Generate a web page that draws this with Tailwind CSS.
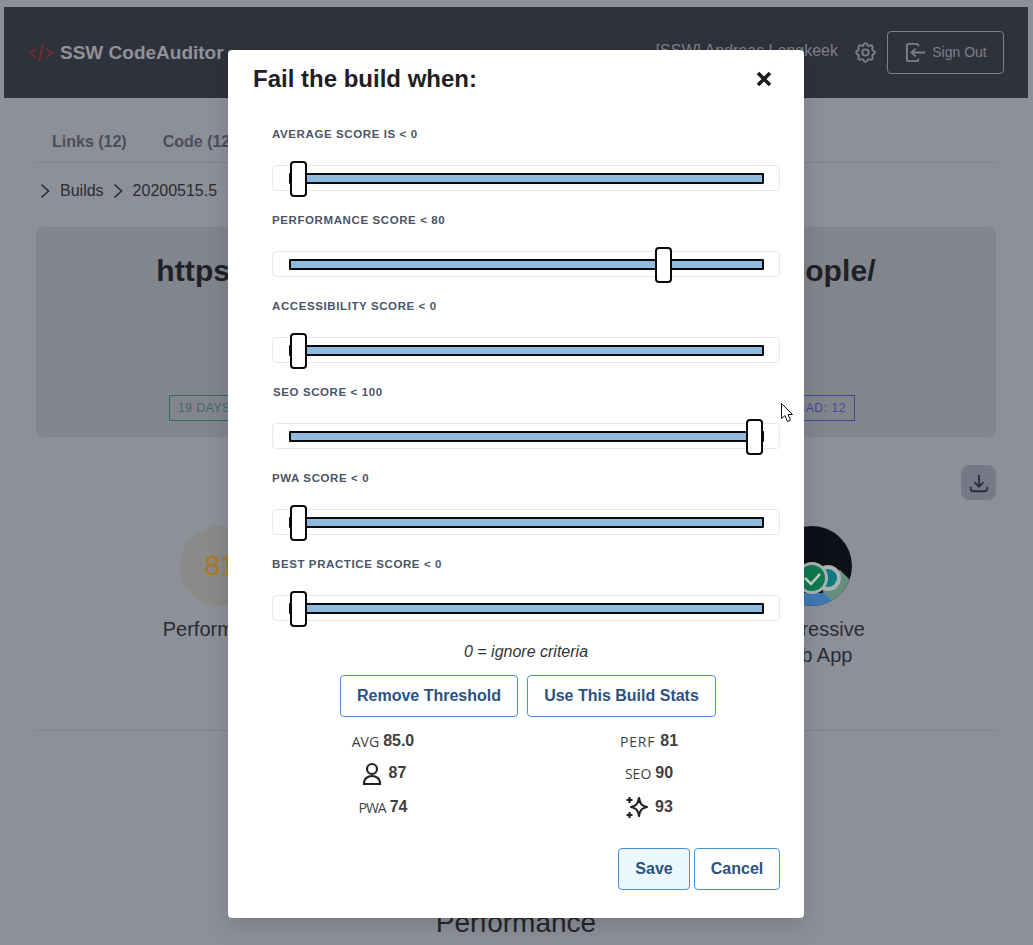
<!DOCTYPE html>
<html lang="en">
<head>
  <meta charset="UTF-8">
  <meta name="viewport" content="width=device-width, initial-scale=1.0">
  <title>SSW CodeAuditor</title>
  <script src="https://cdn.jsdelivr.net/npm/@tailwindcss/browser@4"></script>
</head>
<body class="bg-[#8d9098] font-['Liberation_Sans',sans-serif]">
  <div class="relative h-[945px] w-[1033px] overflow-hidden bg-[#8d9098]">

    <!-- page behind the modal -->
    <div class="pt-[7px] pl-1 pr-[5px]">
      <nav class="flex h-[91px] items-center justify-between bg-[#2f323b] pl-6 pr-6">
        <div class="flex items-center gap-[7px]">
          <svg class="ml-px h-6 w-6 text-[#7f2a2f]" viewBox="0 0 24 24" fill="none" stroke="currentColor" stroke-width="1.6"><path d="M6.500 7.500 1.500 12l5 4.500M17.500 7.500l5 4.500-5 4.500M14 3.500 10 20.500"/></svg>
          <span class="mt-[2px] text-[19px] font-bold text-[#8f929a]">SSW CodeAuditor</span>
        </div>
        <div class="flex items-center">
          <span class="-mt-[3px] text-[16px] text-[#7d8089]">[SSW] Andreas Lengkeek</span>
          <svg class="mr-[-1px] ml-[15px] h-[25px] w-[25px] text-[#7d8089]" viewBox="0 0 24 24" fill="none" stroke="currentColor" stroke-width="1.800"><path d="M10.300 4.300c.4-1.800 3-1.800 3.400 0a1.700 1.700 0 0 0 2.600 1.100c1.500-.9 3.300.8 2.400 2.400a1.700 1.700 0 0 0 1 2.500c1.800.4 1.800 3 0 3.400a1.700 1.700 0 0 0-1 2.600c.9 1.500-.9 3.300-2.400 2.400a1.700 1.700 0 0 0-2.600 1c-.4 1.800-3 1.800-3.400 0a1.700 1.700 0 0 0-2.600-1c-1.500.9-3.300-.9-2.400-2.400a1.700 1.700 0 0 0-1-2.600c-1.800-.4-1.800-3 0-3.400a1.700 1.700 0 0 0 1-2.500c-.9-1.600.9-3.300 2.400-2.400a1.700 1.700 0 0 0 2.600-1.100z"/><circle cx="12" cy="12" r="3"/></svg>
          <div class="ml-[10px] flex h-[43px] w-[117px] items-center justify-center gap-[5px] rounded border border-[#7d8089]">
            <svg class="h-[23px] w-[23px] text-[#7d8089]" viewBox="0 0 24 24" fill="none" stroke="currentColor" stroke-width="2"><path d="M15 5.500V5a2 2 0 0 0-2-2H5a2 2 0 0 0-2 2v14a2 2 0 0 0 2 2h8a2 2 0 0 0 2-2v-.5M22 12H8m4-4-4 4 4 4"/></svg>
            <span class="-mt-[1px] text-[14px] text-[#7d8089]">Sign Out</span>
          </div>
        </div>
      </nav>

      <div class="px-8">
        <div class="flex h-[65px] items-center gap-9 border-b border-[#7f828a] px-4 pt-[42px] pb-[19px] text-[16px] font-bold text-[#4a4e59]">
          <span>Links (12)</span>
          <span>Code (12)</span>
        </div>
        <div class="flex h-[29px] items-center pt-[26px] text-[16px] text-[#2a2c33]">
          <svg class="ml-[4px] h-[16px] w-[10px]" viewBox="0 0 10 16" fill="none" stroke="currentColor" stroke-width="1.600"><path d="m1.500 1.500 7 6.500-7 6.500"/></svg>
          <span class="ml-[10px]">Builds</span>
          <svg class="ml-[9px] h-[16px] w-[10px]" viewBox="0 0 10 16" fill="none" stroke="currentColor" stroke-width="1.600"><path d="m1.500 1.500 7 6.500-7 6.500"/></svg>
          <span class="ml-[10px]">20200515.5</span>
        </div>

        <div class="mt-[35px] h-[210px] rounded-lg bg-[#83858d] pt-[26px] text-center">
          <h1 class="text-[30px] leading-9 font-bold tracking-[0.1px] text-[#1f2128]">https://www.ssw.com.au/rules/consult-our-people/</h1>
          <div class="mt-[106px] flex justify-between pr-[141px] pl-[133px]">
            <span class="border border-[#2d6e57] px-2 py-[3px] text-[12px] tracking-[0.6px] text-[#3d6a66]">19 DAYS AGO</span>
            <span class="border border-[#43479a] px-2 py-[3px] text-[12px] tracking-[0.6px] text-[#43479a]">BAD: 12</span>
          </div>
        </div>

        <div class="mt-[28px] flex justify-end">
          <div class="flex h-[35px] w-[35px] items-center justify-center rounded-lg border border-[#777b85] bg-[#747985]">
            <svg class="h-[22px] w-[22px] text-[#2a2d3a]" viewBox="0 0 24 24" fill="none" stroke="currentColor" stroke-width="2"><path d="M12 3v13m-5-5 5 5 5-5M3 16v2a3 3 0 0 0 3 3h12a3 3 0 0 0 3-3v-2"/></svg>
          </div>
        </div>

        <div class="mt-[26px] flex justify-between px-[114px]">
          <div class="w-[140px] text-center">
            <div class="mx-auto flex h-20 w-20 items-center justify-center rounded-full bg-[#8a8a88] text-[28px] text-[#ad7a1c]">81</div>
            <div class="mt-[10px] text-[20px] leading-[26px] text-[#2a2c33]">Performance</div>
          </div>
          <div class="w-[140px] text-center">
            <div class="relative mx-auto h-20 w-20 overflow-hidden rounded-full bg-[#0d1017]">
              <svg class="h-20 w-20" viewBox="0 0 80 80">
                <path d="M50 50 68 44 77 53 80 80H52z" fill="#668f80"/>
                <path d="M0 80V67H52L62 76 60 80z" fill="#4079b2"/>
                <circle cx="56" cy="52" r="13" fill="#a9b3b3"/>
                <circle cx="56" cy="52" r="9" fill="#0d7a80"/>
                <circle cx="40" cy="52" r="16" fill="#a9b3b3"/>
                <circle cx="40" cy="52" r="13" fill="#0f7a52"/>
                <path d="m33 52 6 6 9-10" fill="none" stroke="#c7d2cd" stroke-width="2.500"/>
              </svg>
            </div>
            <div class="mt-[10px] text-[20px] leading-[26px] text-[#2a2c33]">Progressive<br>Web App</div>
          </div>
        </div>

        <div class="mt-[62px] border-t border-[#7f828a]"></div>
        <div class="mt-[171px] text-center text-[28px] text-[#24262d]">Performance</div>
      </div>
    </div>

    <!-- modal -->
    <div class="absolute top-[50px] left-[228px] h-[868px] w-[576px] rounded bg-white pt-[13px] shadow-[0_8px_24px_rgba(0,0,0,0.15)]">
      <div class="flex h-[32px] items-center justify-between pr-[31px] pl-[25px]">
        <h2 class="text-[24px] font-bold text-[#1f2024]">Fail the build when:</h2>
        <svg class="h-[18px] w-[18px] text-[#1c1c1f]" viewBox="0 0 18 18" fill="none" stroke="currentColor" stroke-width="3.600"><path d="M3 3l12 12M15 3 3 15"/></svg>
      </div>

      <div class="pt-[32px] pr-[24px] pl-[44px]">
        <div class="h-[86px]">
          <div class="text-[11.500px] leading-[14px] font-bold tracking-[0.6px] text-[#4a5568]">AVERAGE SCORE IS &lt; 0</div>
          <div class="relative mt-[24px] h-[26px] rounded border border-[#e4e8f0] pt-[7px] pr-[15px] pl-4">
            <div class="h-[11px] rounded-[1px] border-2 border-[#0a0a0a] bg-[#90bbe0]"></div>
            <div class="absolute top-[-5px] left-[17px] h-[36px] w-[17px] rounded-[4px] border-2 border-[#0a0a0a] bg-white"></div>
          </div>
        </div>
        <div class="h-[86px]">
          <div class="text-[11.500px] leading-[14px] font-bold tracking-[0.6px] text-[#4a5568]">PERFORMANCE SCORE &lt; 80</div>
          <div class="relative mt-[24px] h-[26px] rounded border border-[#e4e8f0] pt-[7px] pr-[15px] pl-4">
            <div class="h-[11px] rounded-[1px] border-2 border-[#0a0a0a] bg-[#90bbe0]"></div>
            <div class="absolute top-[-5px] left-[382px] h-[36px] w-[17px] rounded-[4px] border-2 border-[#0a0a0a] bg-white"></div>
          </div>
        </div>
        <div class="h-[86px]">
          <div class="text-[11.500px] leading-[14px] font-bold tracking-[0.6px] text-[#4a5568]">ACCESSIBILITY SCORE &lt; 0</div>
          <div class="relative mt-[24px] h-[26px] rounded border border-[#e4e8f0] pt-[7px] pr-[15px] pl-4">
            <div class="h-[11px] rounded-[1px] border-2 border-[#0a0a0a] bg-[#90bbe0]"></div>
            <div class="absolute top-[-5px] left-[17px] h-[36px] w-[17px] rounded-[4px] border-2 border-[#0a0a0a] bg-white"></div>
          </div>
        </div>
        <div class="h-[86px]">
          <div class="pl-px text-[11.500px] leading-[14px] font-bold tracking-[0.6px] text-[#4a5568]">SEO SCORE &lt; 100</div>
          <div class="relative mt-[24px] h-[26px] rounded border border-[#e4e8f0] pt-[7px] pr-[15px] pl-4">
            <div class="h-[11px] rounded-[1px] border-2 border-[#0a0a0a] bg-[#90bbe0]"></div>
            <div class="absolute top-[-5px] left-[473px] h-[36px] w-[17px] rounded-[4px] border-2 border-[#0a0a0a] bg-white"></div>
          </div>
        </div>
        <div class="h-[86px]">
          <div class="text-[11.500px] leading-[14px] font-bold tracking-[0.6px] text-[#4a5568]">PWA SCORE &lt; 0</div>
          <div class="relative mt-[24px] h-[26px] rounded border border-[#e4e8f0] pt-[7px] pr-[15px] pl-4">
            <div class="h-[11px] rounded-[1px] border-2 border-[#0a0a0a] bg-[#90bbe0]"></div>
            <div class="absolute top-[-5px] left-[17px] h-[36px] w-[17px] rounded-[4px] border-2 border-[#0a0a0a] bg-white"></div>
          </div>
        </div>
        <div class="h-[86px]">
          <div class="text-[11.500px] leading-[14px] font-bold tracking-[0.6px] text-[#4a5568]">BEST PRACTICE SCORE &lt; 0</div>
          <div class="relative mt-[24px] h-[26px] rounded border border-[#e4e8f0] pt-[7px] pr-[15px] pl-4">
            <div class="h-[11px] rounded-[1px] border-2 border-[#0a0a0a] bg-[#90bbe0]"></div>
            <div class="absolute top-[-5px] left-[17px] h-[36px] w-[17px] rounded-[4px] border-2 border-[#0a0a0a] bg-white"></div>
          </div>
        </div>

        <p class="-mt-[3px] text-center text-[16px] leading-[24px] text-[#333] italic">0 = ignore criteria</p>

        <div class="mt-[11px] flex justify-center gap-[9px] pl-1">
          <button class="h-[42px] w-[178px] rounded border border-[#4a90d9] text-[16px] font-bold text-[#2c5282]">Remove Threshold</button>
          <button class="h-[42px] w-[189px] rounded border border-[#4a90d9] text-[16px] font-bold text-[#2c5282]">Use This Build Stats</button>
        </div>

        <div class="mt-[8px] grid grid-cols-2 pr-[8px] text-[16px] font-bold text-[#3f3f42]">
          <div class="flex h-[32px] items-center justify-center pr-[28px]"><span class="mr-[4px] font-['Open_Sans',sans-serif] text-[14px] font-normal">AVG</span>85.0</div>
          <div class="flex h-[32px] items-center justify-center pl-[4px]"><span class="mr-[5px] font-['Open_Sans',sans-serif] text-[14px] font-normal tracking-[0.8px]">PERF</span>81</div>
          <div class="flex h-[32px] items-center justify-center pr-[28px]">
            <svg class="mr-[5px] h-[24px] w-[24px] text-[#222]" viewBox="0 0 24 24" fill="none" stroke="currentColor" stroke-width="2.200"><circle cx="12" cy="8" r="5"/><path d="M4 23v-1.500a8 6.500 0 0 1 16 0V23z"/></svg>87
          </div>
          <div class="flex h-[32px] items-center justify-center pl-[4px]"><span class="mr-[4px] font-['Open_Sans',sans-serif] text-[14px] font-normal">SEO</span>90</div>
          <div class="flex h-[36px] items-center justify-center pr-[28px]"><span class="mr-[4px] font-['Open_Sans',sans-serif] text-[14px] font-normal tracking-[-1px]">PWA</span>74</div>
          <div class="flex h-[36px] items-center justify-center pl-[4px]">
            <svg class="mr-[6px] h-[24px] w-[24px] text-[#222]" viewBox="0 0 24 24" fill="none" stroke="currentColor" stroke-width="2.200"><path d="M14 3c1 6 2.800 8 8 9-5.200 1-7 3-8 9-1-6-2.800-8-8-9 5.200-1 7-3 8-9z" stroke-linejoin="round"/><path d="M4.500 2v6M1.500 5h6M4.500 17v6M1.500 20h6"/></svg>93
          </div>
        </div>

        <div class="mt-[23px] flex justify-end gap-[4px]">
          <button class="h-[42px] w-[72px] rounded border border-[#4a90d9] bg-[#ebf8ff] text-[16px] font-bold text-[#2c5282]">Save</button>
          <button class="h-[42px] w-[86px] rounded border border-[#4a90d9] text-[16px] font-bold text-[#2c5282]">Cancel</button>
        </div>
      </div>
    </div>

    <!-- mouse pointer -->
    <svg class="absolute top-[402px] left-[780px] h-[22px] w-[14px]" viewBox="0 0 14 22"><path d="M1.500 1.500v15l3.500-3 2.500 6 3-1.300-2.500-5.700h4.500z" fill="#fff" stroke="#111" stroke-width="1"/></svg>
  </div>
</body>
</html>
